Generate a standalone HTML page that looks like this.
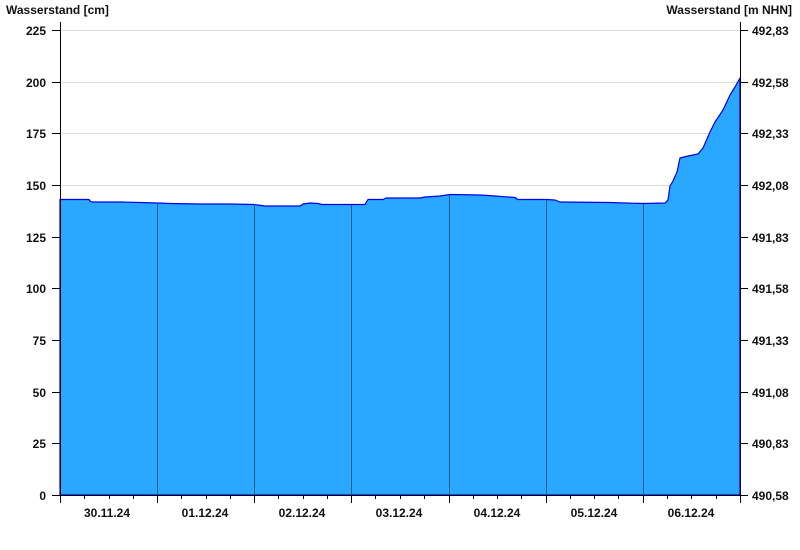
<!DOCTYPE html><html><head><style>body{margin:0;background:#fff}svg{display:block}text{font-family:"Liberation Sans",Arial,sans-serif;font-weight:bold;font-size:12px;fill:#111}</style></head><body>
<svg width="800" height="550" viewBox="0 0 800 550">
<rect width="800" height="550" fill="#fff"/>
<text x="6" y="14" font-size="13">Wasserstand [cm]</text>
<text x="792" y="14" text-anchor="end" font-size="13">Wasserstand [m NHN]</text>
<g stroke="#dcdcdc" stroke-width="1">
<line x1="60" x2="740" y1="30.5" y2="30.5"/><line x1="60" x2="740" y1="82.5" y2="82.5"/><line x1="60" x2="740" y1="133.5" y2="133.5"/><line x1="60" x2="740" y1="185.5" y2="185.5"/><line x1="60" x2="740" y1="237.5" y2="237.5"/><line x1="60" x2="740" y1="288.5" y2="288.5"/><line x1="60" x2="740" y1="340.5" y2="340.5"/><line x1="60" x2="740" y1="392.5" y2="392.5"/><line x1="60" x2="740" y1="443.5" y2="443.5"/>
</g>
<polygon fill="#2aa8ff" stroke="#0000ee" stroke-width="1.2" stroke-linejoin="round" points="60,199.5 89,199.5 90,201 92,202 120,202 140,202.5 157,203 170,203.5 200,204 230,204 254,204.5 265,206 300,206 303,204 310,203 318,203.5 322,204.5 365,204.5 368,199.5 383,199.5 386,198 395,198 420,198 425,197 440,196 450,194.5 480,195 495,196 515,197.5 518,199.5 546,199.5 555,200 560,202 610,202.5 643,203.5 665,203 668,200 670,186 673,181 677,172 680,158 688,156 698,154 703,148 710,132 715,122 723,110 730,95 735,87 740,78 740,495 60,495"/>
<g stroke="#1e5f8a" stroke-width="1">
<line x1="157.5" x2="157.5" y1="203" y2="495"/><line x1="254.5" x2="254.5" y1="204" y2="495"/><line x1="351.5" x2="351.5" y1="205" y2="495"/><line x1="449.5" x2="449.5" y1="195" y2="495"/><line x1="546.5" x2="546.5" y1="200" y2="495"/><line x1="643.5" x2="643.5" y1="204" y2="495"/>
</g>
<g stroke="#000" stroke-width="1">
<line x1="60.5" x2="60.5" y1="22" y2="495"/><line x1="740.5" x2="740.5" y1="22" y2="495"/>
<line x1="52" x2="748" y1="495.5" y2="495.5"/>
<line x1="52" x2="60" y1="30.5" y2="30.5"/><line x1="52" x2="60" y1="82.5" y2="82.5"/><line x1="52" x2="60" y1="133.5" y2="133.5"/><line x1="52" x2="60" y1="185.5" y2="185.5"/><line x1="52" x2="60" y1="237.5" y2="237.5"/><line x1="52" x2="60" y1="288.5" y2="288.5"/><line x1="52" x2="60" y1="340.5" y2="340.5"/><line x1="52" x2="60" y1="392.5" y2="392.5"/><line x1="52" x2="60" y1="443.5" y2="443.5"/>
<line x1="740" x2="748" y1="30.5" y2="30.5"/><line x1="740" x2="748" y1="82.5" y2="82.5"/><line x1="740" x2="748" y1="133.5" y2="133.5"/><line x1="740" x2="748" y1="185.5" y2="185.5"/><line x1="740" x2="748" y1="237.5" y2="237.5"/><line x1="740" x2="748" y1="288.5" y2="288.5"/><line x1="740" x2="748" y1="340.5" y2="340.5"/><line x1="740" x2="748" y1="392.5" y2="392.5"/><line x1="740" x2="748" y1="443.5" y2="443.5"/>
<path d="M60.5 495v8M157.5 495v8M254.5 495v8M351.5 495v8M449.5 495v8M546.5 495v8M643.5 495v8M740.5 495v8"/>
<path d="M84.5 495v4M109.5 495v4M133.5 495v4M181.5 495v4M206.5 495v4M230.5 495v4M278.5 495v4M303.5 495v4M327.5 495v4M375.5 495v4M400.5 495v4M424.5 495v4M473.5 495v4M497.5 495v4M521.5 495v4M570.5 495v4M594.5 495v4M618.5 495v4M667.5 495v4M691.5 495v4M716.5 495v4"/>
</g>
<g text-anchor="end">
<text x="46" y="35">225</text><text x="46" y="87">200</text><text x="46" y="138">175</text><text x="46" y="190">150</text><text x="46" y="242">125</text><text x="46" y="293">100</text><text x="46" y="345">75</text><text x="46" y="397">50</text><text x="46" y="448">25</text><text x="46" y="500">0</text>
</g>
<g>
<text x="752" y="35">492,83</text><text x="752" y="87">492,58</text><text x="752" y="138">492,33</text><text x="752" y="190">492,08</text><text x="752" y="242">491,83</text><text x="752" y="293">491,58</text><text x="752" y="345">491,33</text><text x="752" y="397">491,08</text><text x="752" y="448">490,83</text><text x="752" y="500">490,58</text>
</g>
<g text-anchor="middle">
<text x="107" y="517">30.11.24</text><text x="205" y="517">01.12.24</text><text x="302" y="517">02.12.24</text><text x="399" y="517">03.12.24</text><text x="497" y="517">04.12.24</text><text x="594" y="517">05.12.24</text><text x="691" y="517">06.12.24</text>
</g>
</svg></body></html>
